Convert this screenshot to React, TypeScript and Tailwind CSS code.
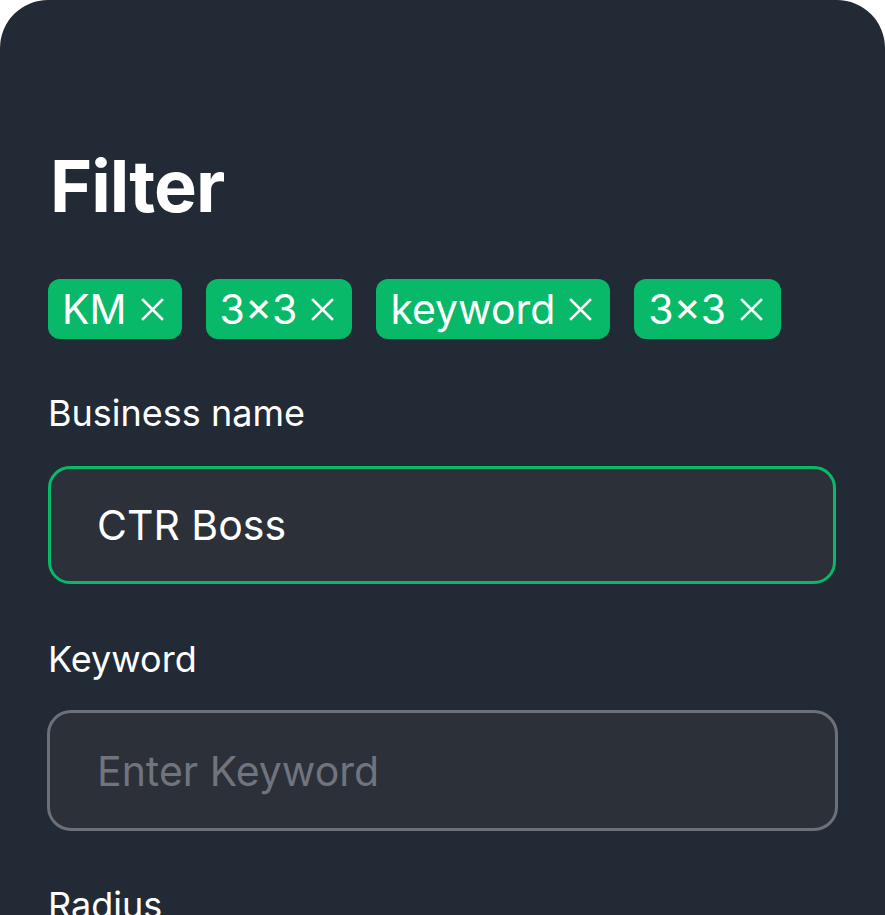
import React from 'react';

const chips = ['KM', '3×3', 'keyword', '3×3'];

const CloseIcon = () => (
  <svg width="23" height="23" viewBox="0 0 23 23" fill="none" stroke="currentColor" strokeWidth="2.6" strokeLinecap="square">
    <path d="M2 2L21 21M21 2L2 21" />
  </svg>
);

export default function App() {
  const [name, setName] = React.useState('CTR Boss');
  const [keyword, setKeyword] = React.useState('');

  return (
    <div className="min-h-screen bg-white" style={{ fontFamily: 'Inter, "Noto Sans", sans-serif' }}>
      <div className="h-[915px] overflow-hidden rounded-t-[48px] bg-[#212a35] pl-[48px] pr-[48px] pt-[150px] text-white">
        <h1 className="pl-[2px] text-[72px] font-bold leading-[72px] tracking-[-1px]">Filter</h1>

        <div className="mt-[57px] flex gap-[24px]">
          {chips.map((chip, i) => (
            <button
              key={i}
              className="flex h-[60px] items-center gap-[14px] rounded-[12px] bg-[#08b96a] pl-[14px] pr-[18px] text-[41px] leading-none text-white"
            >
              <span>{chip}</span>
              <CloseIcon />
            </button>
          ))}
        </div>

        <label className="mt-[56px] block text-[36px] leading-[36px]">Business name</label>
        <input
          value={name}
          onChange={e => setName(e.target.value)}
          className="mt-[35px] block h-[118px] w-[788px] rounded-[22px] border-[3px] border-[#08b96a] bg-[#2c3039] px-[46px] text-[41px] text-white outline-none"
        />

        <label className="mt-[57px] block text-[36px] leading-[36px]">Keyword</label>
        <input
          value={keyword}
          onChange={e => setKeyword(e.target.value)}
          placeholder="Enter Keyword"
          className="-ml-px mt-[33px] block h-[121px] w-[791px] rounded-[24px] border-[3px] border-[#6b7079] bg-[#2c3039] px-[47px] text-[41px] text-white outline-none placeholder:text-[#6f747d]"
        />

        <label className="mt-[56px] block text-[36px] leading-[36px]">Radius</label>
      </div>
    </div>
  );
}
